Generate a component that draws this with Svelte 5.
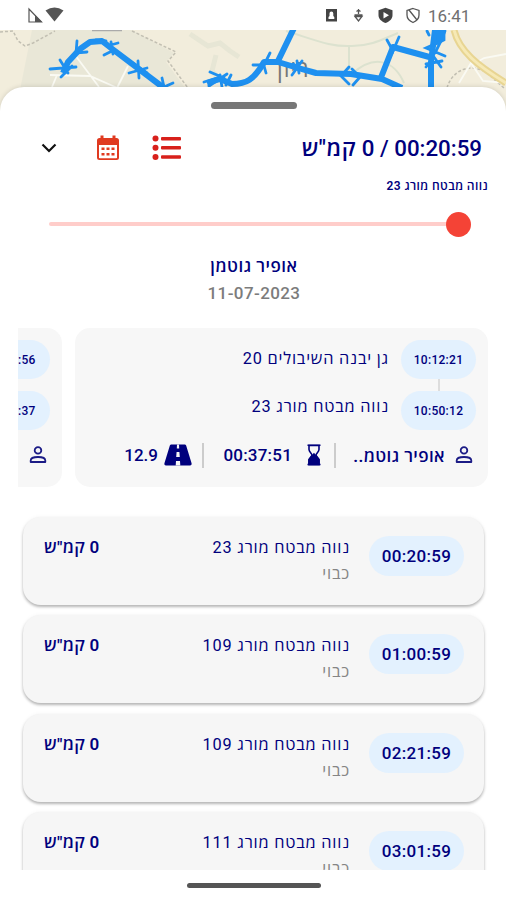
<script lang="ts">
	type Stop = { time: string; place: string; speed: string };

	const stops: Stop[] = [
		{ time: '00:20:59', place: 'נווה מבטח מורג 23', speed: '0 קמ"ש' },
		{ time: '01:00:59', place: 'נווה מבטח מורג 109', speed: '0 קמ"ש' },
		{ time: '02:21:59', place: 'נווה מבטח מורג 109', speed: '0 קמ"ש' },
		{ time: '03:01:59', place: 'נווה מבטח מורג 111', speed: '0 קמ"ש' }
	];

	let position = $state(0);
</script>

{#snippet person()}
	<svg class="person" width="18" height="20" viewBox="0 0 18 20">
		<circle cx="9" cy="5.4" r="3.3" />
		<path d="M1.7 17v-1.6c0-2.1 3.4-3.4 7.3-3.4s7.3 1.3 7.3 3.4V17z" />
	</svg>
{/snippet}

<div class="phone">
	<div class="status">
		<svg width="38" height="18" viewBox="0 0 38 18">
			<path d="M2 2V15h12.500z" fill="none" stroke="#555" stroke-width="1.2" />
			<path d="M8 8v7h7z" fill="#555" />
			<path d="M18.500 3.500Q27.500-2.500 36.500 3.500L27.500 14.500z" fill="#555" />
		</svg>
		<div class="status-right">
			<svg width="98" height="18" viewBox="0 0 98 18">
				<path d="M1 2h11v12.500H1z" fill="#444" />
				<path d="M3.500 12V10l1-1V6.500a1.900 1.900 0 0 1 3.800 0V9l1 1v2z" fill="#fff" />
				<g fill="none" stroke="#555" stroke-width="1.300">
					<path d="M33.500 2v5M29.500 8h8M30 9.500l3.500 4.500 3.500-4.500zM31.500 4.500l2-1.500 2 1.500" />
					<path d="M88 1.500l6 2v4.500c0 4-2.500 6-6 7.500-3.500-1.500-6-3.500-6-7.500V3.500zM84 3l8 10" />
				</g>
				<path d="M60.500.800l7 2.500V8c0 4-3 6.500-7 8-4-1.500-7-4-7-8V3.300z" fill="#444" />
				<path d="M58.500 5l5.500 3.200-5.500 3.200z" fill="#fff" />
			</svg>
			<span class="clock">16:41</span>
		</div>
	</div>

	<svg class="map" width="506" height="90" viewBox="0 30 506 90">
		<rect y="30" width="506" height="90" fill="#f2eddc" />
		<path d="M32 30h100l42 23-8 9 22 30v28H0l20-30z" fill="#e9e7d7" />
		<path d="M50 75l40 1 32 14M57 75l-5 12M128 66l-12 24M75 55l24 32" class="street" />
		<path d="M0 32l13-1 5 10 7 5 8-3 22-12M132 31l44 21-8 9 20 27" class="border" />
		<path d="M190 34l18 12 12-3 10 8 9 6M216 55l-4 16 8 9" fill="none" stroke="#e7e6d5" stroke-width="5" />
		<path d="M286 31c32 10 45 16 66 15 20 0 33-8 46-13M349 47v27M352 74c22-20 42-14 52 9" class="stream" />
		<path d="M447 88c5-18 24-26 40-15l17 15" class="border" />
		<path d="M506 83l-23-2-12-18-12 20M506 54l-22 4-10 6" class="street" />
		<path d="M454 30c5 21 24 36 52 53" fill="none" stroke="#e8d592" stroke-width="7" />
		<path d="M454 30c5 21 24 36 52 53" fill="none" stroke="#f6e9b5" stroke-width="3" />
		<path d="M92 30.500h30" stroke="#aaa" stroke-width="1.500" />
		<text x="277" y="77" class="town">ריון</text>
		<g class="route">
			<path d="M63 73l5-11 12-13 10-7 12-1 9 7 53 40M207 83l13-4 12 5c14 0 22-4 32-22h14l20 6 18 5 35 1 31 5 20 9M278 61l16-33M380 80l13-33 40 11M431 92v-30l4-32" />
		</g>
		<g class="arrows">
			<path d="M50 69l26-2M61 77l11-11M60 60l8 13M77 41l-1 12 11-1M96 40l10 1M104 55l10-5M107 46l11-3M111 42l2 12M129 73l18-5M131 62l16 11M138 61l1 17M162 78l2 9 9-4" />
			<path d="M204 82l16-5M209 86l18-12M210 72l14 6M222 87l-2-12M231 75l-5 10M253 65h11l6-12M263 62l3 11M292 75l10-14M293 64l14 7M297 61l2 12M349 67l-8 9 8 8M352 69l8 8-7 8M387 40l6 11 6-14M437 43l-11 5 19 8M427 31l2 4M435 53l6-12 4-10M426 64l16-3M426 67l8-10 7 10" />
			<path d="M434 31h10v9l-8 4z" style:fill="#1e90f0" />
		</g>
	</svg>

	<div class="sheet" dir="rtl">
		<div class="handle"></div>

		<div class="header">
			<h1>00:20:59 / 0 <b>קמ"ש</b></h1>
			<div class="actions">
				<svg width="30" height="26" viewBox="0 0 30 26" fill="#d8201b">
					<circle cx="3.500" cy="3.500" r="3" /><rect x="9" y="2" width="20" height="3.400" rx="1" />
					<circle cx="3.500" cy="12.700" r="3" /><rect x="9" y="11" width="20" height="3.400" rx="1" />
					<circle cx="3.500" cy="22" r="3" /><rect x="9" y="20.300" width="20" height="3.400" rx="1" />
				</svg>
				<svg width="24" height="26" viewBox="0 0 24 26">
					<path d="M3.500 3h17a2.500 2.500 0 0 1 2.500 2.500v17a2.500 2.500 0 0 1-2.500 2.500h-17A2.500 2.500 0 0 1 1 22.500v-17A2.500 2.500 0 0 1 3.500 3z" fill="#e03a20" />
					<path d="M4.500 .500h3V4h-3zM16.500 .500h3V4h-3z" fill="#e03a20" />
					<path d="M3 10h18V22a1 1 0 0 1-1 1.300H4a1 1 0 0 1-1-1.300z" fill="#fff" />
					<path d="M5.500 12.500h3v2.500h-3zM10.500 12.500h3v2.500h-3zM15.500 12.500h3v2.500h-3zM5.500 18h3v2.500h-3zM10.500 18h3v2.500h-3zM15.500 18h3v2.500h-3z" fill="#e03a20" />
				</svg>
				<svg width="16" height="12" viewBox="0 0 16 12">
					<path d="M1.500 2.500L8 9l6.500-6.500" fill="none" stroke="#111" stroke-width="2.200" />
				</svg>
			</div>
		</div>
		<div class="address">נווה מבטח מורג 23</div>

		<div class="slider">
			<div class="thumb" style="margin-right: {position}%"></div>
		</div>

		<div class="driver">אופיר גוטמן</div>
		<div class="date">11-07-2023</div>

		<div class="trips">
			<div class="trip">
				<div class="legs">
					<div class="times">
						<span class="pill small">10:12:21</span>
						<i></i>
						<span class="pill small">10:50:12</span>
					</div>
					<div class="places">
						<span>גן יבנה השיבולים 20</span>
						<span>נווה מבטח מורג 23</span>
					</div>
				</div>
				<div class="stats">
					{@render person()}
					<span class="who">אופיר גוטמ..</span>
					<i></i>
					<svg class="glass" width="14" height="22" viewBox="0 0 14 22">
						<path d="M2 1.500h10v4c0 2.500-3 4-3 5.500s3 3 3 5.500v4H2v-4c0-2.500 3-4 3-5.500S2 8 2 5.500z" />
						<path d="M.500 1.300h13M.500 20.500h13" />
						<path d="M7 10l5 5.500v5H2v-5z" fill="#00007d" />
					</svg>
					<span class="duration">00:37:51</span>
					<i></i>
					<svg class="road" width="28" height="22" viewBox="0 0 28 22">
						<path d="M7.500.500h13c1 0 1.500.500 1.800 1.500l5.200 17c.500 1.500-.200 2.500-1.500 2.500H2c-1.300 0-2-1-1.500-2.500l5.200-17c.300-1 .800-1.500 1.800-1.500z" fill="#00007d" />
						<path d="M13 .500h2l.200 4h-2.400zM12.600 8h2.800l.400 5h-3.600zM12 17h4l.300 4.500h-4.600z" fill="#f7f7f7" />
					</svg>
					<span class="km">12.9</span>
				</div>
			</div>
			<div class="trip next">
				<div class="legs">
					<div class="times">
						<span class="pill small">:56</span>
						<i class="off"></i>
						<span class="pill small">:37</span>
					</div>
				</div>
				<div class="stats">{@render person()}</div>
			</div>
		</div>

		<div class="stops">
			{#each stops as stop (stop.time)}
				<div class="stop">
					<span class="pill">{stop.time}</span>
					<div class="where">
						<div>{stop.place}</div>
						<div class="state">כבוי</div>
					</div>
					<div class="speed">{stop.speed}</div>
				</div>
			{/each}
		</div>
		<div class="navbar"></div>
	</div>
</div>

<style>
	:global(body) {
		margin: 0;
		background: #fff;
	}
	.phone {
		width: 506px;
		height: 900px;
		overflow: hidden;
		display: flex;
		flex-direction: column;
		background: #fff;
		color: #00007d;
		font-family: Roboto, 'Open Sans', 'Liberation Sans', sans-serif;
	}
	.status {
		flex: none;
		height: 30px;
		box-sizing: border-box;
		padding: 7px 35px 0 27px;
		display: flex;
		justify-content: space-between;
		align-items: flex-start;
	}
	.status-right {
		display: flex;
		gap: 5px;
	}
	.clock {
		font-size: 17px;
		line-height: 18px;
		color: #707070;
		width: 43px;
	}
	.map {
		flex: none;
		display: block;
		margin-bottom: -33px;
	}
	.street {
		fill: none;
		stroke: #fafaf3;
		stroke-width: 1.8;
	}
	.border {
		fill: none;
		stroke: #c2bfb2;
		stroke-width: 1.5;
		stroke-dasharray: 3 2;
	}
	.stream {
		fill: none;
		stroke: #dce2cf;
		stroke-width: 2;
	}
	.town {
		font-size: 23px;
		letter-spacing: 1px;
		fill: #777;
	}
	.route path {
		fill: none;
		stroke: #1e90f0;
		stroke-width: 6;
		stroke-linejoin: round;
	}
	.arrows path {
		fill: none;
		stroke: #1e90f0;
		stroke-width: 2.8;
		stroke-linecap: round;
	}
	.sheet {
		position: relative;
		flex: 1;
		display: flex;
		flex-direction: column;
		background: #fff;
		border-radius: 24px 24px 0 0;
		box-shadow: 0 0 5px rgba(0, 0, 0, 0.15);
	}
	.handle {
		flex: none;
		width: 86px;
		height: 7px;
		margin: 15px 209px 0 0;
		border-radius: 4px;
		background: #777;
	}
	.header {
		height: 40px;
		margin-top: 19px;
		padding: 0 24px 0 41px;
		display: flex;
		align-items: center;
		justify-content: space-between;
	}
	h1 {
		margin: 0;
		font-size: 22.3px;
		font-weight: 500;
		line-height: 40px;
	}
	h1 b {
		font-weight: 600;
		letter-spacing: 0.6px;
	}
	.actions {
		display: flex;
		align-items: center;
		gap: 33px;
	}
	.actions svg:nth-child(1) {
		margin-left: -1px;
	}
	.actions svg:nth-child(2) {
		margin: 0 0 0 6px;
	}
	.address {
		height: 16px;
		margin-top: 10px;
		padding-right: 18px;
		font-size: 12px;
		line-height: 16px;
		font-weight: 600;
		letter-spacing: 0.4px;
	}
	.slider {
		width: 410px;
		height: 4px;
		margin: 28px 47px 0 0;
		border-radius: 2px;
		background: #ffcdca;
		display: flex;
		align-items: center;
	}
	.thumb {
		flex: none;
		width: 25px;
		height: 25px;
		border-radius: 50%;
		background: #f44336;
		translate: 12px 0;
	}
	.driver,
	.date {
		text-align: center;
		font-size: 17px;
		line-height: 24px;
		font-weight: 500;
		padding-left: 2px;
	}
	.driver {
		margin-top: 28px;
		font-weight: 600;
		letter-spacing: 0.5px;
	}
	.date {
		margin-top: 3px;
		color: #7c7c7c;
		letter-spacing: 0.4px;
	}
	.trips {
		height: 159px;
		margin: 23px 18px 0;
		overflow: hidden;
		display: flex;
		gap: 13px;
	}
	.trip {
		flex: none;
		width: 413px;
		box-sizing: border-box;
		padding: 12px 12px 0;
		border-radius: 15px;
		background: #f7f7f7;
	}
	.trip.next {
		width: 44px;
		border-radius: 0 15px 15px 0;
	}
	.next .pill.small {
		width: 32px;
		margin-right: 0;
		border-radius: 0 20px 20px 0;
		justify-content: flex-start;
	}
	.legs {
		display: flex;
		gap: 12px;
	}
	.times {
		display: flex;
		flex-direction: column;
		align-items: center;
	}
	.times i {
		width: 2px;
		height: 12px;
		background: #ddd;
	}
	.times i.off {
		background: none;
	}
	.pill {
		display: flex;
		align-items: center;
		justify-content: center;
		width: 95px;
		height: 40px;
		border-radius: 20px;
		background: #e3f1fe;
		font-size: 17px;
		font-weight: 500;
		letter-spacing: 0.3px;
		direction: ltr;
	}
	.pill.small {
		width: 75px;
		height: 39px;
		font-size: 12px;
	}
	.places {
		display: flex;
		flex-direction: column;
		gap: 24px;
		padding-top: 7px;
		font-size: 16.3px;
		line-height: 24px;
		letter-spacing: 0.8px;
	}
	.stats {
		display: flex;
		align-items: center;
		height: 28px;
		margin-top: 11px;
		padding-right: 3px;
		font-size: 17px;
		font-weight: 500;
	}
	.stats i {
		width: 2px;
		height: 25px;
		background: #ccc;
	}
	.person {
		flex: none;
		fill: none;
		stroke: #1c1c86;
		stroke-width: 1.8;
		stroke-linejoin: round;
	}
	.who {
		width: 96px;
		margin: 0 10px 0 13px;
		white-space: nowrap;
		font-weight: 600;
		letter-spacing: 0.4px;
	}
	.glass {
		margin: 0 13px 0 15px;
		fill: none;
		stroke: #00007d;
		stroke-width: 1.6;
	}
	.duration {
		width: 69px;
		margin-left: 19px;
		letter-spacing: 0.2px;
	}
	.road {
		margin: 0 10px 0 6px;
	}
	.stops {
		flex: none;
		height: 358px;
		margin-top: 25px;
		padding: 5px 22px 0 23px;
		box-sizing: border-box;
		overflow: hidden;
	}
	.stop {
		display: flex;
		height: 88px;
		margin-bottom: 10.4px;
		box-sizing: border-box;
		padding: 19px 20px 0 21px;
		border-radius: 18px;
		background: #f6f6f6;
		box-shadow: 0 2px 3px rgba(0, 0, 0, 0.28), 0 0 5px rgba(0, 0, 0, 0.04);
	}
	.where {
		flex: 1;
		margin-right: 19px;
		font-size: 16.3px;
		line-height: 24px;
		letter-spacing: 0.8px;
	}
	.where .state {
		color: #858585;
		margin-top: 2px;
	}
	.speed {
		font-size: 17px;
		font-weight: 600;
		line-height: 22px;
		letter-spacing: 0.3px;
	}
	.navbar {
		flex: none;
		width: 134px;
		height: 5px;
		margin: 13px 185px 0 0;
		border-radius: 3px;
		background: #555;
	}
</style>
